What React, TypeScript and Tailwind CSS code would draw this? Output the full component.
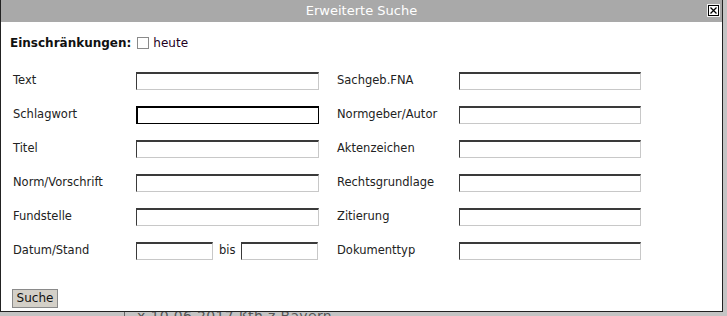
import React from "react";

const font = { fontFamily: '"DejaVu Sans", Verdana, sans-serif' };

const left = ["Text", "Schlagwort", "Titel", "Norm/Vorschrift", "Fundstelle"];
const right = ["Sachgeb.FNA", "Normgeber/Autor", "Aktenzeichen", "Rechtsgrundlage", "Zitierung", "Dokumenttyp"];

function Field({ w, focus }: { w: string; focus?: boolean }) {
  const cls = focus
    ? "border border-t-2 border-l-2 border-black"
    : "border border-t-2 border-t-[#3a3a3a] border-l-[#3a3a3a] border-r-[#c8c8c8] border-b-[#c8c8c8]";
  return <input className={`${w} h-[18px] bg-white outline-none ${cls}`} />;
}

function CloseIcon() {
  return (
    <svg width="13" height="13" viewBox="0 0 13 13">
      <rect x="0" y="0" width="13" height="13" fill="#f2f2f2" />
      <rect x="1.5" y="1.5" width="10" height="10" fill="#fff" stroke="#000" />
      <path d="M3.5 3.5 L9.5 9.5 M9.5 3.5 L3.5 9.5" stroke="#000" strokeWidth="1.3" />
    </svg>
  );
}

export default function App() {
  return (
    <div className="relative w-[727px] h-[316px] bg-[#c4c4c4] overflow-hidden" style={font}>
      <div className="pl-[124px] pt-[306px] text-[14px] text-[#555] tracking-wide">
        <span className="border-l border-[#666] pl-3">x 10.06.2017 ßth z Bayern</span>
      </div>
      <div className="absolute left-0 top-0 w-[723px] h-[312px] bg-white border-l border-r border-b border-[#222] flex flex-col">
        <div className="h-[22px] bg-[#a9a9a9] flex items-center relative">
          <div className="flex-1 text-center text-white text-[13px]">Erweiterte Suche</div>
          <div className="absolute right-[2px] top-[4px]">
            <CloseIcon />
          </div>
        </div>
        <div className="flex items-center pl-[9px] mt-[13px] h-[16px]">
          <span className="font-bold text-[12px] text-[#111]">Einschränkungen:</span>
          <span className="ml-[6px] w-[12px] h-[12px] border border-[#8a8a8a] bg-white" />
          <span className="ml-[4px] text-[12px] text-[#220022]">heute</span>
        </div>
        <div className="mt-[21px] pl-[12px] grid grid-cols-[123px_183px_18px_122px_182px] gap-y-[16px] text-[11.5px] text-[#222]">
          {right.map((r, i) => (
            <React.Fragment key={r}>
              <div className="h-[18px] flex items-center">{i < 5 ? left[i] : "Datum/Stand"}</div>
              {i < 5 ? (
                <Field w="w-[183px]" focus={i === 1} />
              ) : (
                <div className="flex items-center">
                  <Field w="w-[77px]" />
                  <span className="ml-[6px] mr-[5px]">bis</span>
                  <Field w="w-[77px]" />
                </div>
              )}
              <div />
              <div className="h-[18px] flex items-center">{r}</div>
              <Field w="w-[182px]" />
            </React.Fragment>
          ))}
        </div>
        <div className="mt-[25px] pl-[11px]">
          <button className="w-[46px] h-[19px] bg-[#d4d0c8] border border-[#8a8a8a] text-[12px] text-[#111] leading-none">
            Suche
          </button>
        </div>
      </div>
    </div>
  );
}
